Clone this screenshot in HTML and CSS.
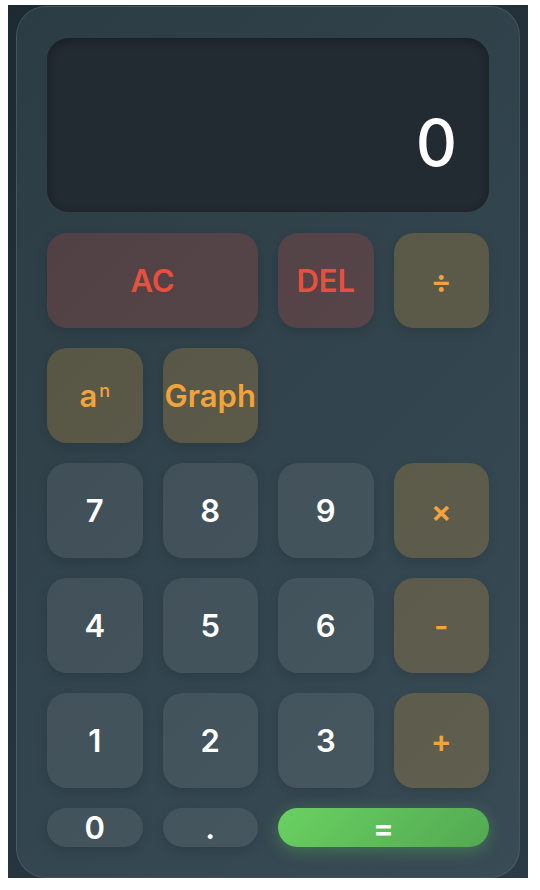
FILE: index.html
```html
<!DOCTYPE html>
<html lang="en">
<head>
    <meta charset="UTF-8">
    <meta name="viewport" content="width=device-width, initial-scale=1.0">
    <title>Calculator</title>
    <link rel="stylesheet" href="styles.css">
</head>
<body>
    <div class="app">
        <div class="calculator">
            <div class="display" id="display">0</div>

            <div class="keys">
                <button class="key key-clear key-wide">AC</button>
                <button class="key key-clear">DEL</button>
                <button class="key key-op">÷</button>

                <button class="key key-op">a<sup>n</sup></button>
                <button class="key key-op">Graph</button>
                <span></span>
                <span></span>

                <button class="key">7</button>
                <button class="key">8</button>
                <button class="key">9</button>
                <button class="key key-op">×</button>

                <button class="key">4</button>
                <button class="key">5</button>
                <button class="key">6</button>
                <button class="key key-op">-</button>

                <button class="key">1</button>
                <button class="key">2</button>
                <button class="key">3</button>
                <button class="key key-op">+</button>

                <button class="key key-low">0</button>
                <button class="key key-low">.</button>
                <button class="key key-low key-equals key-wide">=</button>
            </div>
        </div>
    </div>
</body>
</html>
```

FILE: styles.css
```css
* { margin: 0; padding: 0; box-sizing: border-box; }
body { font-family: Inter, "Liberation Sans", sans-serif; background: #fff; color: #fff; }

.app { margin: 5px 12px 12px 8px; height: 873px; padding: 1px 8px 0; overflow: hidden; background: linear-gradient(135deg, #1d2a31 0%, #2b3c46 100%); }

.calculator { height: 872px; padding: 31px 30px 30px; border-radius: 30px; border: 1px solid rgba(255,255,255,0.1); background: linear-gradient(135deg, #2b3c44 0%, #394b55 100%); }

.display { height: 174px; margin-bottom: 21px; padding: 30px 32px; border-radius: 22px; background: #222b31; box-shadow: inset 0 2px 10px rgba(0,0,0,0.3); display: flex; align-items: flex-end; justify-content: flex-end; font-size: 64px; font-weight: 500; line-height: 1.2; }

.keys { display: grid; grid-template-columns: repeat(4, 1fr); grid-auto-rows: 95px; gap: 20px; }
.keys .key-low { height: 39px; }

.key { border: none; border-radius: 20px; background: rgba(255,255,255,0.08); color: #fff; font-family: inherit; font-size: 31px; font-weight: 600; display: flex; align-items: center; justify-content: center; box-shadow: 0 4px 12px rgba(0,0,0,0.12); cursor: pointer; }
.key-wide { grid-column: span 2; }
.key-clear { background: rgba(231,76,60,0.2); color: #e8503d; }
.key-op { background: rgba(255,180,60,0.2); color: #f2a33a; }
.key-op sup { font-size: 18px; font-weight: 500; margin-left: 2px; position: relative; top: -5px; }
.key-equals { background: linear-gradient(135deg, #6ad162 0%, #52a852 100%); color: #fff; box-shadow: 0 4px 16px rgba(90,200,90,0.35); }
```
